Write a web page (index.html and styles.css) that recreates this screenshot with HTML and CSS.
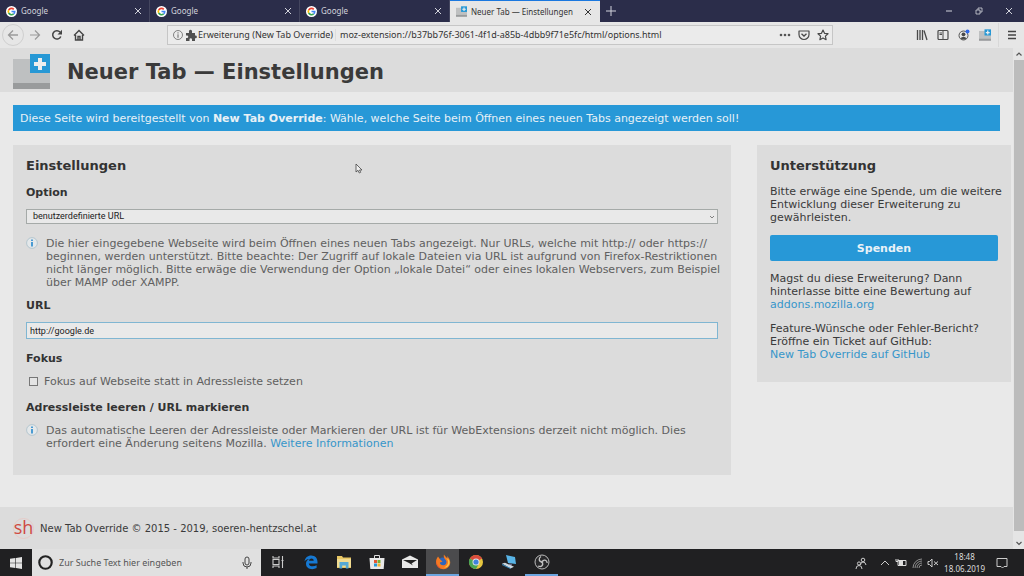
FILE: index.html
```html
<!DOCTYPE html>
<html lang="de">
<head>
<meta charset="utf-8">
<title>Neuer Tab — Einstellungen</title>
<link rel="stylesheet" href="styles.css">
</head>
<body>
<svg class="defs" aria-hidden="true">
  <symbol id="google" viewBox="0 0 24 24"><circle cx="12" cy="12" r="12" fill="#fff"/><g fill="none" stroke-width="3.6"><path d="M17 7.2A7 7 0 0 0 5.8 8.8" stroke="#ea4335"/><path d="M5.8 8.8a7 7 0 0 0 0 6.4" stroke="#fbbc05"/><path d="M5.8 15.2A7 7 0 0 0 16.6 17.3" stroke="#34a853"/><path d="M12 12h7a7 7 0 0 1-2.4 5.3" stroke="#4285f4"/></g></symbol>
  <symbol id="close" viewBox="0 0 8 8"><path d="M1 1l6 6M7 1L1 7" fill="none" stroke="currentColor"/></symbol>
  <symbol id="newtab" viewBox="0 0 37 35"><path d="M0 5h37v30H0z" fill="#bec0c1"/><path d="M0 29h37v6H0z" fill="#999b9c"/><path d="M17 0h20v19H17z" fill="#2798d5"/><path d="M25 4h4v4h4v4h-4v4h-4v-4h-4V8h4z" fill="#eee"/></symbol>
  <symbol id="info" viewBox="0 0 12 12"><circle cx="6" cy="6" r="5.4" fill="#e4e8ea" stroke="#a9bfca" stroke-width=".8"/><path d="M6 2.4v1.5M6 5v4.4" stroke="#2588cc" stroke-width="1.6"/></symbol>
</svg>
<div class="browser">
  <header class="tabs">
    <div class="tab"><svg class="fav"><use href="#google"/></svg><span>Google</span><button aria-label="Tab schließen"><svg><use href="#close"/></svg></button></div>
    <div class="tab"><svg class="fav"><use href="#google"/></svg><span>Google</span><button aria-label="Tab schließen"><svg><use href="#close"/></svg></button></div>
    <div class="tab"><svg class="fav"><use href="#google"/></svg><span>Google</span><button aria-label="Tab schließen"><svg><use href="#close"/></svg></button></div>
    <div class="tab active"><svg class="fav"><use href="#newtab"/></svg><span>Neuer Tab — Einstellungen</span><button aria-label="Tab schließen"><svg><use href="#close"/></svg></button></div>
    <button class="add" aria-label="Neuer Tab"><svg viewBox="0 0 10 10"><path d="M5 0v10M0 5h10" stroke="currentColor"/></svg></button>
    <div class="window-buttons">
      <button aria-label="Minimieren"><svg viewBox="0 0 8 8"><path d="M1 4h6" stroke="currentColor"/></svg></button>
      <button aria-label="Verkleinern"><svg viewBox="0 0 8 8"><path d="M1 3h4v4H1zM3 3V1h4v4H5" fill="none" stroke="currentColor" stroke-width=".8"/></svg></button>
      <button aria-label="Schließen"><svg><use href="#close"/></svg></button>
    </div>
  </header>
  <nav class="toolbar">
    <div class="nav-buttons">
      <button class="back" aria-label="Zurück"><svg viewBox="0 0 12 12"><path d="M11 6H1.5M6 1.5L1.5 6 6 10.500" fill="none" stroke="#9a9a9a" stroke-width="1.3"/></svg></button>
      <button aria-label="Vor"><svg viewBox="0 0 12 12"><path d="M1 6h9.500M6 1.500L10.500 6 6 10.500" fill="none" stroke="#9a9a9a" stroke-width="1.200"/></svg></button>
      <button aria-label="Neu laden"><svg viewBox="0 0 12 12"><path d="M9.800 7.500A4.200 4.200 0 1 1 9 3" fill="none" stroke="#444" stroke-width="1.500"/><path d="M11 .8V5.500H6.500z" fill="#444"/></svg></button>
      <button aria-label="Startseite"><svg viewBox="0 0 12 12"><path d="M1 6.500L6 1.500l5 5M2.500 6v5h7V6M5 11V7.500h2V11" fill="none" stroke="#444" stroke-width="1.400"/></svg></button>
    </div>
    <div class="urlbar">
      <svg viewBox="0 0 12 12"><circle cx="6" cy="6" r="4.500" fill="none" stroke="#666" stroke-width=".8"/><path d="M6 3.300v1.200M6 5.300v3.500" stroke="#666"/></svg>
      <svg viewBox="0 0 12 12"><path d="M1 4h3V3a1.600 1.600 0 1 1 3 0v1h3v2.500h.5a1.400 1.400 0 1 1 0 2.800H10V12H7V10.500a1.200 1.200 0 0 0-2.500 0V12H1V9h1a1.200 1.200 0 0 0 0-2.500H1z" fill="#505050"/></svg>
      <span class="identity">Erweiterung (New Tab Override)</span>
      <input class="address" aria-label="Adresse" value="moz-extension://b37bb76f-3061-4f1d-a85b-4dbb9f71e5fc/html/options.html">
      <svg viewBox="0 0 12 12"><g fill="#555"><circle cx="2" cy="6" r="1.300"/><circle cx="6" cy="6" r="1.300"/><circle cx="10" cy="6" r="1.300"/></g></svg>
      <svg class="gap" viewBox="0 0 12 12"><path d="M1 2h10v3.500a5 5 0 0 1-10 0z" fill="none" stroke="#4a4a4a" stroke-width="1.200" stroke-linejoin="round"/><path d="M3.500 4.700L6 7l2.500-2.300" fill="none" stroke="#4a4a4a" stroke-width="1.300"/></svg>
      <svg class="gap" viewBox="0 0 12 12"><path d="M6 1l1.500 3.300 3.500.4-2.600 2.400.7 3.600L6 8.900l-3.100 1.800.7-3.600L1 4.700l3.500-.4z" fill="none" stroke="#4a4a4a" stroke-width="1.200" stroke-linejoin="round"/></svg>
    </div>
    <div class="tools">
      <button aria-label="Bibliothek"><svg viewBox="0 0 12 12"><path d="M1.500 1v10M4 1v10M6.500 1v10M8 1.500l3 9.500" fill="none" stroke="#4a4a4a" stroke-width="1.300"/></svg></button>
      <button aria-label="Seitenleisten"><svg viewBox="0 0 12 12"><rect x="1" y="1.500" width="10" height="9" rx="1" fill="none" stroke="#4a4a4a" stroke-width="1.200"/><path d="M6 2v8M2.500 4H5M2.500 5.500H5" stroke="#4a4a4a"/></svg></button>
      <button aria-label="Konto"><svg viewBox="0 0 12 12"><circle cx="5.500" cy="6.500" r="4.500" fill="none" stroke="#555"/><circle cx="5.500" cy="5.300" r="1.900" fill="#4a4a4a"/><path d="M2.300 9.300q3.200-3.200 6.400 0-3.200 2.500-6.400 0" fill="#4a4a4a"/><circle cx="9.500" cy="2.500" r="2" fill="#2f68e8"/></svg></button>
      <button aria-label="New Tab Override"><svg><use href="#newtab"/></svg></button>
      <button class="menu" aria-label="Menü"><svg viewBox="0 0 12 12"><path d="M2 2.500h8M2 6h8M2 9.500h8" stroke="#444" stroke-width="1.300"/></svg></button>
    </div>
  </nav>
  <div class="viewport">
    <div class="page">
      <div class="page-head"><svg class="logo"><use href="#newtab"/></svg><h1>Neuer Tab — Einstellungen</h1></div>
      <p class="banner">Diese Seite wird bereitgestellt von <strong>New Tab Override</strong>: Wähle, welche Seite beim Öffnen eines neuen Tabs angezeigt werden soll!</p>
      <div class="columns">
        <main class="panel settings">
          <h2>Einstellungen</h2>
          <h3><label for="option">Option</label></h3>
          <div class="select"><select id="option"><option>benutzerdefinierte URL</option></select><svg viewBox="0 0 6 6"><path d="M1 2l2 2 2-2" fill="none" stroke="#666" stroke-width=".8"/></svg></div>
          <div class="hint"><svg><use href="#info"/></svg><p>Die hier eingegebene Webseite wird beim Öffnen eines neuen Tabs angezeigt. Nur URLs, welche mit http:// oder https://<br>beginnen, werden unterstützt. Bitte beachte: Der Zugriff auf lokale Dateien via URL ist aufgrund von Firefox-Restriktionen<br>nicht länger möglich. Bitte erwäge die Verwendung der Option „lokale Datei“ oder eines lokalen Webservers, zum Beispiel<br>über MAMP oder XAMPP.</p></div>
          <h3><label for="url">URL</label></h3>
          <input id="url" class="url" type="text" value="http://google.de">
          <h3>Fokus</h3>
          <label class="check"><input type="checkbox">Fokus auf Webseite statt in Adressleiste setzen</label>
          <h3>Adressleiste leeren / URL markieren</h3>
          <div class="hint last"><svg><use href="#info"/></svg><p>Das automatische Leeren der Adressleiste oder Markieren der URL ist für WebExtensions derzeit nicht möglich. Dies<br>erfordert eine Änderung seitens Mozilla. <a href="#info">Weitere Informationen</a></p></div>
        </main>
        <aside class="panel support">
          <h2>Unterstützung</h2>
          <p>Bitte erwäge eine Spende, um die weitere<br>Entwicklung dieser Erweiterung zu<br>gewährleisten.</p>
          <button class="donate">Spenden</button>
          <p>Magst du diese Erweiterung? Dann<br>hinterlasse bitte eine Bewertung auf<br><a href="#addons">addons.mozilla.org</a></p>
          <p>Feature-Wünsche oder Fehler-Bericht?<br>Eröffne ein Ticket auf GitHub:<br><a href="#github">New Tab Override auf GitHub</a></p>
        </aside>
      </div>
      <footer class="page-foot"><span class="sh">sh</span><span>New Tab Override © 2015 - 2019, soeren-hentzschel.at</span></footer>
    </div>
    <div class="scrollbar"><svg viewBox="0 0 8 8"><path d="M1.500 5.500L4 3l2.500 2.500" fill="none" stroke="#555" stroke-width="1.200"/></svg><div class="thumb"></div><svg viewBox="0 0 8 8"><path d="M1.500 3L4 5.500 6.500 3" fill="none" stroke="#555" stroke-width="1.200"/></svg></div>
  </div>
</div>
<footer class="taskbar">
  <button class="start" aria-label="Start"><svg viewBox="0 0 12 12"><path d="M0 1.700L5.400 1v4.700H0zM6 .9L12 0v5.700H6zM0 6.300h5.400V11L0 10.300zM6 6.300h6V12l-6-.9z" fill="#e4e4e4"/></svg></button>
  <label class="search"><svg class="cortana" viewBox="0 0 14 14"><circle cx="7" cy="7" r="5.800" fill="none" stroke="#222" stroke-width="2"/></svg><input type="text" aria-label="Suche" placeholder="Zur Suche Text hier eingeben"><svg class="mic" viewBox="0 0 12 14"><rect x="4" y="1" width="4" height="8" rx="2" fill="none" stroke="#444"/><path d="M2 6v1a4 4 0 0 0 8 0V6M6 11v2" fill="none" stroke="#444"/></svg></label>
  <div class="apps">
    <button aria-label="Aktive Anwendungen"><svg viewBox="0 0 16 16"><path d="M3 2v2h6V2M3 14v-2h6v2M3 5.500h6v5H3zM12.500 2v12M11.500 6.500h2" fill="none" stroke="#ccc" stroke-width="1.100"/></svg></button>
    <button aria-label="Edge"><svg viewBox="0 0 16 16"><path d="M1.500 7.500C2 3.500 4.700 1.400 8.200 1.400c4 0 6.300 2.800 6.300 6.500v1.600H5.800c.2 3.300 4.900 3.600 7.800 1.700v2.900c-4.500 2.300-10.600.8-10.600-4.400 0-2.200 1-3.700 3-4.800-2 .3-3.500 1-4.500 2.600zm4.500-.7h4.700c0-3.200-4.300-3.200-4.700 0z" fill="#1679d3"/></svg></button>
    <button aria-label="Explorer"><svg viewBox="0 0 16 16"><path d="M1 2h5l1 1.500h8V14H1z" fill="#e8c765"/><path d="M1 5h14v8H1z" fill="#f1db91"/><path d="M3.500 8h9v6.500h-2.700v-3H6.200v3H3.500z" fill="#55a9d5"/></svg></button>
    <button aria-label="Store"><svg viewBox="0 0 16 16"><path d="M5.500 5V1.500h5V5" fill="none" stroke="#ddd"/><path d="M.5 4h15l-.8 11H1.300z" fill="#e8e8e8"/><path d="M5 6h3v3H5z" fill="#e55631"/><path d="M8.500 6h3v3h-3z" fill="#77af31"/><path d="M5 9.500h3v3H5z" fill="#2597d5"/><path d="M8.500 9.500h3v3h-3z" fill="#efb52f"/></svg></button>
    <button aria-label="Mail"><svg viewBox="0 0 16 16"><path d="M0 5.500L8 1.500l8 4V14H0z" fill="#e8e8e8"/><path d="M1 6h14L9.500 9.500 11 11.500 7 9z" fill="#222"/></svg></button>
    <button class="current" aria-label="Firefox"><svg viewBox="0 0 16 16"><circle cx="8" cy="8.500" r="5" fill="#2e65bc"/><path d="M3 2.500c-3 4-2.500 8.500.5 11 3.500 2.800 9 2 11-2 1.600-3.200.5-7-2.500-9.500l.7 3C11.500 3 10 2.500 9 .5c-.8 2.500.5 4 1.800 5.500 1.600 2.200.2 5-2.300 5.300C6 11.500 4.500 10 5 8.500l2.500-.7-2-2C5 5 4 4 3 2.500z" fill="#f57b22"/><path d="M11.500 4c3 4 1.500 8-2.500 9.400 3.300.4 5.500-2 5.500-5 0-2-1-3.500-3-4.400z" fill="#ffc443"/><path d="M2 5c-1 5 1 8.500 5 9.500-4-.2-6.500-3.500-5-9.500z" fill="#e63b40"/></svg></button>
    <button aria-label="Chrome"><svg viewBox="0 0 16 16"><circle cx="8" cy="8" r="7" fill="#e6c63f"/><path d="M8 8L1.900 4.500A7 7 0 0 1 14.100 4.500z" fill="#d94b3d"/><path d="M1.900 4.500A7 7 0 0 0 8 15l3-5.500-3-1.500z" fill="#49a557"/><circle cx="8" cy="8" r="3.500" fill="#e6e6e6"/><circle cx="8" cy="8" r="2.600" fill="#3e82dd"/></svg></button>
    <button aria-label="Fernwartung"><svg viewBox="0 0 16 16"><path d="M5 1l9 2 1 7-8-1z" fill="#58b4e7"/><path d="M8 9.500l3 .5-.5 2h-2z" fill="#668"/><path d="M1 9.500l3-.8 9 4-3.500 1.800z" fill="#cbd7df"/><path d="M1 10.500l8.500 4" stroke="#3b8cc0"/></svg></button>
    <button class="open" aria-label="OBS"><svg viewBox="0 0 16 16"><circle cx="8" cy="8" r="7" fill="#29292b" stroke="#bbb"/><path d="M8 8C4.500 7.500 4.500 4 7 2.500M8 8c1.500-3.200 5-2 5.200 1M8 8c2 3-.8 5.500-3.800 4" fill="none" stroke="#c5c5c5" stroke-width="1.300"/><circle cx="8" cy="8" r="1.300" fill="#bbb"/></svg></button>
  </div>
  <div class="tray">
    <svg viewBox="0 0 12 12"><g fill="none" stroke="#ccc"><circle cx="8" cy="3" r="1.800"/><path d="M5.500 8q0-3 2.500-3t3 3"/><circle cx="4" cy="6.500" r="1.600"/><path d="M1 12q0-3.500 3-3.500T7 12"/></g></svg>
    <svg class="up" viewBox="0 0 12 12"><path d="M2 8l4-4 4 4" fill="none" stroke="#ccc"/></svg>
    <svg viewBox="0 0 12 12"><path d="M3 3.500h8v5H3z" fill="none" stroke="#ddd"/><path d="M4 4h4v4H4z" fill="#ddd"/><path d="M1 2v2.500h2V2" fill="none" stroke="#ddd"/></svg>
    <svg viewBox="0 0 12 12"><g fill="none" stroke="#aaa" stroke-width=".8"><path d="M2 11A9 9 0 0 1 11 2M4 11a7 7 0 0 1 7-7M6 11a5 5 0 0 1 5-5M8 11a3 3 0 0 1 3-3"/></g></svg>
    <svg viewBox="0 0 12 12"><path d="M1 4.500h1.500L5 2v8L2.500 7.500H1zM7 4.500l4 3.500M11 4.500L7 8" fill="none" stroke="#ccc"/></svg>
    <div class="clock"><time>18:48</time><time>18.06.2019</time></div>
    <svg class="notice" viewBox="0 0 12 12"><path d="M1 1.500h10v8H8L6.500 11 5 9.500H1z" fill="none" stroke="#ccc"/></svg>
  </div>
</footer>
<svg class="cursor" viewBox="0 0 8 12"><path d="M1 1v8l2-1.700L4.300 10l1.400-.7L4.500 7H7z" fill="#eee" stroke="#444" stroke-width=".8"/></svg>
</body>
</html>
```
FILE: styles.css
```css
* { box-sizing: border-box; }
body {
  margin: 0;
  height: 100vh;
  display: flex;
  flex-direction: column;
  overflow: hidden;
  background: #e9e9e9;
  color: #3a3a3a;
  font: 11px/13px "DejaVu Sans", Verdana, sans-serif;
}
h1, h2, h3, p { margin: 0; }
button { padding: 0; border: 0; background: none; color: inherit; font: inherit; display: flex; align-items: center; justify-content: center; }
input, select { font: inherit; color: inherit; margin: 0; border-radius: 0; outline: 0; min-width: 0; }
svg { flex: none; display: block; }
a { color: #3796ca; text-decoration: none; }
.defs { position: absolute; width: 0; height: 0; }
.browser { flex: 1; min-height: 0; display: flex; flex-direction: column; }

.tabs { display: flex; height: 22px; flex: none; background: #2b2d4a; color: #d3d4dc; font: 8px/12px "Noto Sans", sans-serif; }
.tab { width: 150px; display: flex; align-items: center; gap: 4px; padding: 0 7px 0 6px; border-right: 1px solid #44465f; }
.tab .fav { width: 11px; height: 11px; }
.tab span { flex: 1; white-space: nowrap; }
.tab button svg, .window-buttons svg { width: 8px; height: 8px; }
.tab.active { background: #e6e6e6; color: #333; border-top: 1px solid #1b78df; border-right: 0; padding-right: 8px; }
.add { width: 22px; }
.add svg { width: 10px; height: 10px; }
.window-buttons { margin-left: auto; display: flex; }
.window-buttons button { width: 30px; }

.toolbar { display: flex; align-items: center; height: 26px; flex: none; background: #e6e6e6; color: #333; font: 9px/12px "Noto Sans", sans-serif; }
.toolbar svg { width: 12px; height: 12px; }
.nav-buttons { display: flex; align-items: center; width: 167px; padding-left: 2px; }
.nav-buttons button { width: 22px; height: 22px; }
.nav-buttons .back { border: 1px solid #cfcfcf; border-radius: 50%; }
.urlbar { flex: 1; height: 20px; display: flex; align-items: center; gap: 1px; padding: 0 3px 0 4px; background: #ebebeb; border: 1px solid #c6c6c6; }
.identity { padding: 0 2px 0 0; border-right: 1px solid #ddd; white-space: nowrap; }
.address { flex: 1; border: 0; background: none; padding: 0 3px; }
.gap { margin-left: 6px; }
.tools { display: flex; align-items: center; width: 191px; padding-left: 78px; }
.tools button { width: 21px; height: 24px; flex: none; }
.tools .menu { width: 26px; margin-left: 3px; border-left: 1px solid #d8d8d8; }

.viewport { flex: 1; min-height: 0; display: flex; }
.page { flex: 1; min-width: 0; display: flex; flex-direction: column; }
.page-head { display: flex; align-items: center; gap: 17px; height: 44px; padding: 3px 13px 0; background: #dcdcdc; }
.logo { width: 37px; height: 35px; }
h1 { font-size: 21px; line-height: 28px; }
.banner { margin: 13px 13px 14px; padding: 7px 7px 6px; background: #2798d7; color: #e8f1f6; }
.columns { display: flex; align-items: flex-start; gap: 26px; padding: 0 2px 0 13px; }
.columns p { white-space: nowrap; }
.panel { background: #dcdcdc; padding: 13px 13px 25px; }
.settings { flex: 1; min-width: 0; display: flex; flex-direction: column; color: #606060; }
.support { width: 254px; display: flex; flex-direction: column; gap: 11px; padding-bottom: 21px; }
h2 { font-size: 13px; line-height: 16px; color: #333; }
h3 { font-size: 11px; line-height: 13px; color: #333; margin: 13px 0 10px; }
h2 + h3 { margin-top: 12px; }
.select { display: flex; align-items: center; height: 15px; background: #e9e9e9; border: 1px solid #a5aaa8; padding-right: 2px; }
.select select { flex: 1; height: 13px; appearance: none; border: 0; background: none; padding: 0 6px; color: #222; font: 9px/13px Roboto, sans-serif; }
.select svg { width: 6px; height: 6px; }
.hint { display: flex; gap: 8px; margin-top: 13px; }
.hint svg { width: 12px; height: 12px; }
.hint.last { margin-top: 0; }
.hint + h3 { margin-top: 10px; }
.url { height: 17px; border: 1px solid #80b6d2; background: #e9e9e9; padding: 0 3px; color: #222; font: 9px/15px Roboto, sans-serif; }
.check { display: flex; align-items: center; gap: 6px; padding-left: 3px; }
.check input { appearance: none; width: 9px; height: 9px; border: 1px solid #777; background: #e4e4e4; }
.donate { height: 26px; border-radius: 2px; background: #2798d7; color: #e9f2f7; font-weight: bold; }
.page-foot { margin-top: auto; height: 42px; display: flex; align-items: center; gap: 6px; padding: 0 13px; background: #dcdcdc; font-size: 10px; }
.sh { width: 21px; height: 21px; border: 1px solid #e6cbc8; border-radius: 50%; color: #cf4a42; font: 18px/17px "Open Sans", sans-serif; display: flex; justify-content: center; }
.scrollbar { width: 11px; display: flex; flex-direction: column; align-items: center; padding: 2px 0; background: #e5e5e5; }
.scrollbar svg { width: 8px; height: 8px; }
.thumb { flex: 1; width: 10px; margin: 2px 0 8px; background: #bcbcbc; }

.taskbar { flex: none; height: 27px; display: flex; background: #202022; color: #ddd; font: 9px/12px "Noto Sans", sans-serif; }
.start { width: 32px; }
.start svg { width: 12px; height: 12px; }
.search { width: 229px; display: flex; align-items: center; gap: 6px; padding: 0 8px 0 6px; background: #e0e0e0; color: #555; }
.search input { flex: 1; border: 0; background: none; padding: 0; }
.search input::placeholder { color: #555; opacity: 1; }
.cortana { width: 15px; height: 15px; }
.mic { width: 12px; height: 14px; }
.apps { display: flex; }
.apps button { width: 33px; border-bottom: 2px solid transparent; }
.apps svg { width: 16px; height: 16px; }
.apps .current { background: #4b4b4d; border-color: #6ca5df; }
.apps .open { border-color: #6ca5df; }
.tray { margin-left: auto; display: flex; align-items: center; gap: 4px; padding-right: 16px; }
.tray svg { width: 12px; height: 12px; }
.tray .up { margin-left: 8px; }
.clock { display: flex; flex-direction: column; align-items: center; padding: 0 7px 0 1px; font-size: 8px; }
.cursor { position: absolute; left: 355px; top: 163px; width: 8px; height: 12px; }
```
